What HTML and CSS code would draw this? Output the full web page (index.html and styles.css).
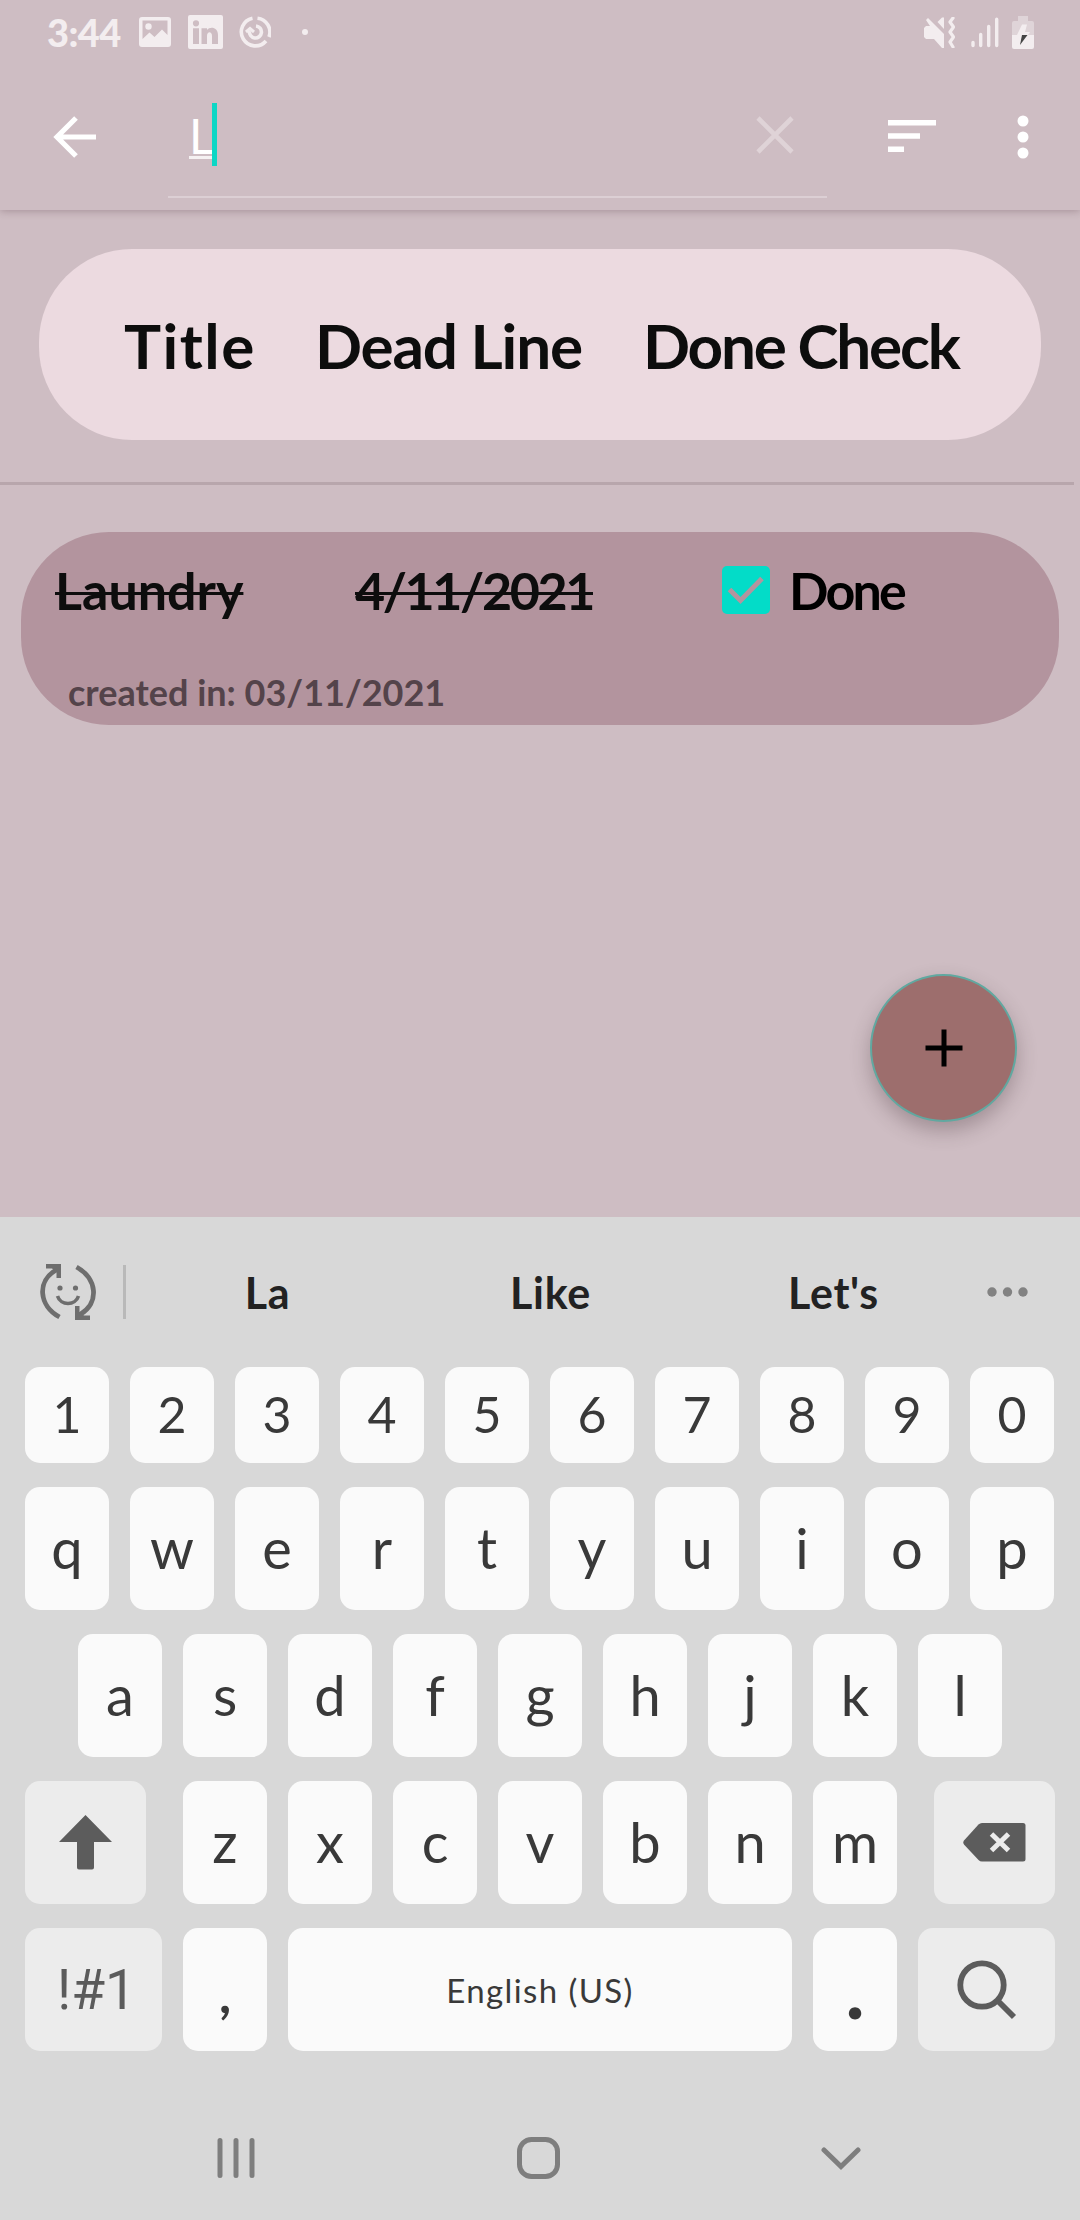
FILE: index.html
```html
<!DOCTYPE html>
<html lang="en">
<head>
<meta charset="utf-8">
<title>To-do list</title>
<link rel="stylesheet" href="styles.css">
</head>
<body>
<div class="screen">
  <header class="top">
    <div class="status">
      <span class="time">3:44</span>
      <svg class="st-image" width="32" height="30" viewBox="0 0 32 30"><path fill-rule="evenodd" d="M3 0h26a3 3 0 0 1 3 3v24a3 3 0 0 1-3 3H3a3 3 0 0 1-3-3V3a3 3 0 0 1 3-3zM3.500 3.500v18.500l7-6.500 5 4.500 7.500-7.500 5.500 5.500V3.500z"/><circle cx="9.500" cy="9.500" r="3.200"/></svg>
      <svg class="st-in" width="35" height="34" viewBox="0 0 35 34"><path fill-rule="evenodd" d="M2 0h31a2 2 0 0 1 2 2v30a2 2 0 0 1-2 2H2a2 2 0 0 1-2-2V2a2 2 0 0 1 2-2zM8 5.200a3.100 3.100 0 1 0 0 6.200 3.100 3.100 0 0 0 0-6.200zM5 13.200v15.800h6V13.200zM13.500 13.200v15.800h5.500v-8c0-5 5-5 5 0v8h6v-9c0-8-8-9-11-5v-1.800z"/></svg>
      <svg class="st-ring" width="32" height="32" viewBox="0 0 32 32" fill="none" stroke="#f3edef" stroke-width="3.600"><path d="M13.500 2.200A14 14 0 1 0 27 25"/><path d="M18.500 2.200A14 14 0 0 1 30 21"/><path d="M17 10a6 6 0 1 1-6.500 5"/><path d="M7 16l4-3.500 4 3.500" stroke-width="3"/></svg>
      <i class="st-dot"></i>
      <svg class="st-mute" width="31" height="31" viewBox="0 0 31 31"><path d="M2 9h4L2 3 4 1l16 16v14h-2l-8-9H2l-2-2v-9z"/><path d="M13.500 5L18 .5h2V12z"/><path d="M29 1l-3 4 3.500 5-3.500 5 3.500 5-3.500 5 3 5" fill="none" stroke="#f3edef" stroke-width="3.200" stroke-linejoin="round" stroke-linecap="round"/></svg>
      <svg class="st-signal" width="28" height="31" viewBox="0 0 28 31" fill="none" stroke="#f3edef" stroke-width="3.400" stroke-linecap="round"><path d="M2 25.500v3M9.700 17.500v11M17.700 9.500v19M25.700 2.200v26.300"/></svg>
      <svg class="st-battery" width="22" height="33" viewBox="0 0 22 33"><path d="M6 0h10v5h4a2 2 0 0 1 2 2v12H0V7a2 2 0 0 1 2-2h4z" fill="#dfd4d8"/><path d="M0 19h22v12a2 2 0 0 1-2 2H2a2 2 0 0 1-2-2z"/><path d="M10 8.500h5L13 16h5l-2 3H5z"/><path d="M10 19h5.500L8 29z" fill="#444"/></svg>
    </div>
    <div class="toolbar">
      <svg class="back" width="43" height="42" viewBox="0 0 43 42" fill="none" stroke="#fff" stroke-width="5.200"><path d="M23 2L4 21l19 19M4 21h39"/></svg>
      <div class="search">
        <span class="query">L</span><i class="caret"></i>
        <svg class="clear" width="38" height="38" viewBox="0 0 38 38" stroke="#dfd3d7" stroke-width="4.600"><path d="M2 2l34 34M36 2L2 36"/></svg>
      </div>
      <svg class="sort" width="48" height="32" viewBox="0 0 48 32" fill="#fff"><path d="M0 0h48v5.500H0zM0 13.200h32v5.500H0zM0 26.400h16v5.500H0z"/></svg>
      <svg class="more" width="12" height="44" viewBox="0 0 12 44" fill="#fff"><circle cx="6" cy="6" r="5.500"/><circle cx="6" cy="22" r="5.500"/><circle cx="6" cy="38" r="5.500"/></svg>
    </div>
  </header>

  <main class="content">
    <div class="heading"><span class="h-title">Title</span><span class="h-dead">Dead Line</span><span class="h-done">Done Check</span></div>
    <div class="rule"></div>
    <section class="item">
      <div class="item-row">
        <span class="item-cell"><s class="item-name">Laundry</s></span>
        <span class="item-cell"><s class="item-date">4/11/2021</s></span>
        <svg class="check" width="48" height="48" viewBox="0 0 48 48"><rect width="48" height="48" rx="5" fill="#03dcc8"/><path d="M7.500 23.500l11 11L40 12.500" fill="none" stroke="#b3949e" stroke-width="5"/></svg>
        <span class="item-done">Done</span>
      </div>
      <div class="created">created in: 03/11/2021</div>
    </section>
    <button class="fab" aria-label="Add"><svg width="38" height="38" viewBox="0 0 38 38"><path d="M19 .5v37M.5 19h37" stroke="#000" stroke-width="5"/></svg></button>
  </main>

  <section class="keyboard">
    <div class="suggest">
      <svg class="emoji" width="56" height="56" viewBox="0 0 56 56" fill="none" stroke="#6e6e6e" stroke-width="4.800"><path d="M19.500 53C-1 42-4 17 17 5.500"/><path d="M36.500 3C57 14 60 39 40 50.500"/><path d="M6 0h15v14h-4.500V8L12 4.500H6zM50 56H35V42h4.500v6l4.500 3.500h6z" fill="#6e6e6e" stroke="none"/><path d="M17.500 32c3 10 18 10 21 0" stroke-width="3.600"/><circle cx="20" cy="24" r="2.600" fill="#6e6e6e" stroke="none"/><circle cx="35.500" cy="24" r="2.600" fill="#6e6e6e" stroke="none"/></svg>
      <i class="bar"></i>
      <span class="words"><span>La</span><span>Like</span><span>Let's</span></span>
      <svg class="dots" width="42" height="10" viewBox="0 0 42 10" fill="#828282"><circle cx="5" cy="5" r="4.700"/><circle cx="20.500" cy="5" r="4.700"/><circle cx="36" cy="5" r="4.700"/></svg>
    </div>
    <div class="row digits"><b>1</b><b>2</b><b>3</b><b>4</b><b>5</b><b>6</b><b>7</b><b>8</b><b>9</b><b>0</b></div>
    <div class="row"><b>q</b><b>w</b><b>e</b><b>r</b><b>t</b><b>y</b><b>u</b><b>i</b><b>o</b><b>p</b></div>
    <div class="row inset"><b>a</b><b>s</b><b>d</b><b>f</b><b>g</b><b>h</b><b>j</b><b>k</b><b>l</b></div>
    <div class="row wide">
      <b class="fn shift"><svg width="53" height="55" viewBox="0 0 53 55"><path d="M26.500 0L53 27H35v25.500q0 2-2 2H20q-2 0-2-2V27H0z" fill="#5c5c5c"/></svg></b>
      <span class="letters"><b>z</b><b>x</b><b>c</b><b>v</b><b>b</b><b>n</b><b>m</b></span>
      <b class="fn shift"><svg width="63" height="39" viewBox="0 0 63 39"><path d="M19 0h41a2.500 2.500 0 0 1 2.500 2.500v33.500A2.500 2.500 0 0 1 60 38.500H19q-2 0-3.500-1.500L1 21.500q-1.500-2 0-4L15.500 1.500Q17 0 19 0z" fill="#5c5c5c"/><path d="M28.500 11l17 16.500M45.500 11l-17 16.500" stroke="#ececec" stroke-width="5"/></svg></b>
    </div>
    <div class="row">
      <b class="fn sym">!#1</b>
      <b class="comma">,</b>
      <b class="space">English (US)</b>
      <b class="period">.</b>
      <b class="fn find"><svg width="60" height="60" viewBox="0 0 60 60" fill="none" stroke="#5c5c5c" stroke-width="5.800"><circle cx="25" cy="25" r="21.700"/><path d="M40.500 40.500L57 57"/></svg></b>
    </div>
    <nav class="nav">
      <svg width="38" height="42" viewBox="0 0 38 42"><path d="M3 3.500v35M19 3.500v35M35 3.500v35"/></svg>
      <svg width="43" height="42" viewBox="0 0 43 42"><rect x="2.500" y="2.500" width="38" height="37" rx="12"/></svg>
      <svg width="40" height="42" viewBox="0 0 40 42"><path d="M3 13l17 16.500L37 13"/></svg>
    </nav>
  </section>
</div>
</body>
</html>
```
FILE: styles.css
```css
* { box-sizing: border-box; }
body { margin: 0; }
svg, i { display: block; flex: none; }
.screen {
  width: 1080px; height: 2220px; overflow: hidden;
  display: flex; flex-direction: column;
  background: #cebdc3;
  font-family: Lato, "Open Sans", sans-serif;
  color: #0d0d0d;
}

/* status bar and toolbar */
.top {
  height: 210px; flex: none;
  background: #cebdc3;
  box-shadow: 0 1px 8px rgba(70, 40, 50, .3);
}
.status { height: 64px; display: flex; align-items: center; padding: 0 46px 0 47px; fill: #f3edef; }
.time { width: 92px; font-size: 38px; font-weight: 900; color: #f3edef; line-height: 64px; letter-spacing: -.6px; }
.st-in { margin-left: 17px; }
.st-ring { margin-left: 16px; }
.st-dot { width: 6px; height: 6px; margin-left: 31px; border-radius: 50%; background: #f3edef; }
.st-mute { margin-left: auto; }
.st-signal { margin-left: 16px; }
.st-battery { margin-left: 13px; }
.toolbar { height: 146px; display: flex; align-items: flex-start; }
.back { margin: 52px 0 0 53px; }
.search {
  width: 659px; height: 134px; margin-left: 72px; padding: 39px 33px 0 21px;
  display: flex; align-items: flex-start;
  border-bottom: 2px solid #dccfd4;
}
.query {
  height: 56px; line-height: 65px; width: 23px;
  font-size: 48px; color: #fff; border-bottom: 3px solid #f5f1f2;
}
.caret { width: 5px; height: 63px; background: #0bd7c5; }
.clear { margin: 13px 0 0 auto; }
.sort { margin: 56px 0 0 61px; }
.more { margin: 51px 0 0 81px; }

/* list */
.content { position: relative; height: 1007px; flex: none; padding-top: 39px; }
.heading {
  height: 191px; margin: 0 39px; padding-left: 85px; border-radius: 93px;
  display: grid; grid-template-columns: 191px 328px auto; align-items: center;
  background: #ecdae0; font-size: 62px; font-weight: 700; white-space: nowrap;
}
.h-title { letter-spacing: 1.5px; }
.h-dead { letter-spacing: -1.2px; }
.h-done { letter-spacing: -2.2px; }
.rule { width: 1074px; height: 3px; margin-top: 42px; background: #b8a6ac; }
.item {
  height: 193px; margin: 47px 21px 0; padding: 34px 0 0 34px;
  border-radius: 88px; background: #b3949e;
}
.item-row {
  display: grid; grid-template-columns: 300px 367px 67px auto; align-items: center;
  height: 48px; font-size: 52px; line-height: 48px; font-weight: 700;
}
.item-name, .item-date { text-decoration: line-through 3px; }
.item-date { letter-spacing: -2.4px; }
.item-done { color: #000; letter-spacing: -2.8px; }
.created { height: 92px; margin: 32px 0 0 13px; font-size: 36px; line-height: 92px; color: #54434a; font-weight: 700; }
.fab {
  position: absolute; left: 870px; top: 764px; width: 147px; height: 148px;
  display: flex; align-items: center; justify-content: center; padding: 0;
  border: 2px solid #61a8a0; border-radius: 50%; background: #9d6e6d;
  box-shadow: 0 9px 20px rgba(60, 40, 45, .3);
}

/* keyboard */
.keyboard {
  flex: 1; background: #d8d8d8; padding: 0 25px;
  display: flex; flex-direction: column; gap: 24px;
}
.suggest { height: 126px; display: flex; align-items: center; padding: 24px 0 0 15px; }
.bar { width: 3px; height: 54px; margin-left: 27px; background: #b9b9b9; }
.words {
  width: 849px; display: grid; grid-template-columns: repeat(3, 1fr);
  text-align: center; font-size: 43px; font-weight: 700; color: #222; letter-spacing: .7px;
}
.dots { margin-left: 12px; }
.row {
  height: 123px; display: flex; gap: 21px;
  font-size: 56px; color: #393939;
}
.row.digits { height: 96px; font-size: 50px; }
.row.inset { padding-left: 53px; }
.row b {
  width: 84px; height: 100%; border-radius: 15px; background: #fafafa;
  display: flex; align-items: center; justify-content: center;
  font-weight: 400; padding-bottom: 3px; flex: none;
}
.row.wide { justify-content: space-between; }
.letters { display: flex; gap: 21px; }
.row .fn { background: #ececec; padding: 0; }
.row .shift { width: 121px; }
.row .sym { width: 137px; padding-left: 6px; font-family: Roboto, sans-serif; font-size: 55px; color: #5b5b5b; }
.row .comma { font-weight: 700; font-size: 52px; padding: 6px 0 0; }
.row .space { width: 504px; font-size: 33px; padding: 0; letter-spacing: 1.4px; }
.row .period { font-weight: 900; font-size: 76px; padding: 0; }
.row .find { width: 137px; }
.nav {
  height: 42px; margin-top: 62px; padding: 0 194px 0 192px;
  display: flex; justify-content: space-between;
  fill: none; stroke: #7e7e7e; stroke-width: 5; stroke-linecap: round;
}
```
